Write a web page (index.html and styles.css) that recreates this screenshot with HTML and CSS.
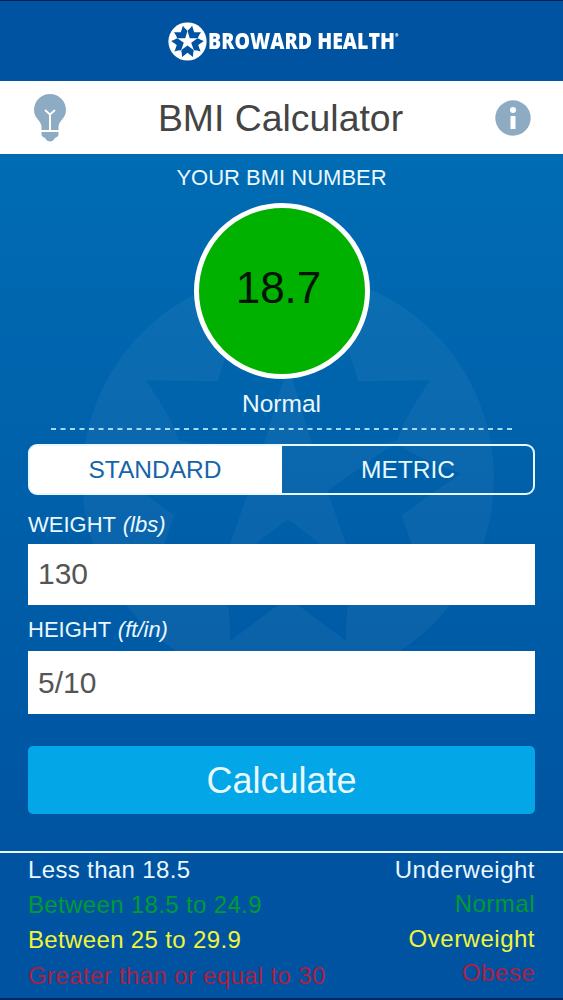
FILE: index.html
```html
<!DOCTYPE html>
<html lang="en">
<head>
    <meta charset="UTF-8">
    <meta name="viewport" content="width=device-width, initial-scale=1.0">
    <title>BMI Calculator</title>
    <link rel="stylesheet" href="styles.css">
</head>
<body>
    <div class="app">
        <!-- emblem behind the form -->
        <svg class="watermark" viewBox="-100 -100 200 200">
            <defs>
                <path id="arm" d="M0 20 L21 36 Q29 41 32 46 Q28 60 28 79 L0 58 L-28 79 Q-28 60 -32 46 Q-29 41 -21 36 Z"/>
                <g id="arms">
                    <use href="#arm"/>
                    <use href="#arm" transform="rotate(72)"/>
                    <use href="#arm" transform="rotate(144)"/>
                    <use href="#arm" transform="rotate(216)"/>
                    <use href="#arm" transform="rotate(288)"/>
                </g>
                <mask id="cutout" maskUnits="userSpaceOnUse" x="-100" y="-100" width="200" height="200">
                    <circle r="100" fill="#fff"/>
                    <use href="#arms" fill="#000"/>
                </mask>
            </defs>
            <circle r="100" fill="#fff" fill-opacity="0.045" mask="url(#cutout)"/>
        </svg>

        <header class="brand">
            <svg class="brand-mark" viewBox="-100 -100 200 200">
                <circle r="98" fill="#fff"/>
                <use href="#arms" fill="#0053a0"/>
            </svg>
            <span class="brand-name">BROWARD HEALTH<sup>®</sup></span>
        </header>

        <div class="title-bar">
            <svg class="bulb" viewBox="0 0 32 48">
                <path fill="#8eabc4" d="M16 0 C7 0 0 7 0 16 C0 25 7.500 26 7.500 33 V36 H24.500 V33 C24.500 26 32 25 32 16 C32 7 25 0 16 0 Z"/>
                <path fill="none" stroke="#fff" stroke-width="1.900" d="M16 36 V20 M11 16 L16 20.500 L21 16"/>
                <path fill="#8eabc4" d="M7.500 38 H24.500 V41 Q24 43 21 44 Q19 47.500 16 47.500 Q13 47.500 11 44 Q8 43 7.500 41 Z"/>
            </svg>
            <h1>BMI Calculator</h1>
            <svg class="info" viewBox="0 0 36 36">
                <circle cx="18" cy="18" r="17.700" fill="#8eabc4"/>
                <circle cx="18" cy="10" r="3" fill="#fff"/>
                <path fill="#fff" d="M15.500 16 H20.500 V29 H15.500 Z"/>
            </svg>
        </div>

        <main>
            <section class="result">
                <h2>YOUR BMI NUMBER</h2>
                <div class="score">18.7</div>
                <p class="score-label">Normal</p>
                <svg class="divider" viewBox="0 0 462 2"><path d="M0 1 H462"/></svg>
            </section>

            <form onsubmit="return false">
                <div class="units">
                    <button type="button" class="unit active">STANDARD</button>
                    <button type="button" class="unit">METRIC</button>
                </div>
                <label for="weight">WEIGHT <i>(lbs)</i></label>
                <input type="text" id="weight" value="130">
                <label for="height" class="height-label">HEIGHT <i>(ft/in)</i></label>
                <input type="text" id="height" class="height-input" value="5/10">
                <button type="submit" class="calculate">Calculate</button>
            </form>
        </main>

        <footer class="legend">
            <div class="ranges">
                <span>Less than 18.5</span>
                <span class="normal">Between 18.5 to 24.9</span>
                <span class="over">Between 25 to 29.9</span>
                <span class="obese">Greater than or equal to 30</span>
            </div>
            <div class="names">
                <span>Underweight</span>
                <span class="normal">Normal</span>
                <span class="over">Overweight</span>
                <span class="obese">Obese</span>
            </div>
        </footer>
    </div>
</body>
</html>
```
FILE: styles.css
```css
* {
    box-sizing: border-box;
}
body {
    margin: 0;
    font-family: "Liberation Sans", Arial, sans-serif;
    color: #e8f8ff;
}
h1, h2, p {
    margin: 0;
    font-weight: normal;
}
.app {
    position: relative;
    height: 1000px;
    overflow: hidden;
    background: linear-gradient(#006cb3 154px, #0053a0 870px);
    border-bottom: 2px solid #002764;
}
.watermark {
    position: absolute;
    left: 82px;
    top: 272px;
    width: 412px;
    height: 412px;
}
.brand {
    height: 81px;
    padding: 1px 0 0 168px;
    display: flex;
    align-items: center;
    background: #0053a0;
    border-top: 1px solid #001f54;
}
.brand-mark {
    flex: none;
    width: 39px;
    height: 39px;
}
.brand-name {
    margin: 0 0 3px 1px;
    font-family: "Open Sans", sans-serif;
    font-size: 23px;
    line-height: 30px;
    font-weight: 800;
    color: #fff;
    white-space: nowrap;
    transform: scaleX(0.85);
    transform-origin: left center;
}
.brand-name sup {
    font-size: 5px;
    line-height: 0;
    vertical-align: 12px;
}
.title-bar {
    height: 73px;
    padding: 0 32px 0 34px;
    display: flex;
    align-items: center;
    justify-content: space-between;
    background: #fff;
}
.title-bar h1 {
    padding-top: 1px;
    font-size: 37.400px;
    line-height: 40px;
    color: #444;
}
.bulb {
    width: 32px;
    height: 48px;
}
.info {
    width: 36px;
    height: 36px;
}
main {
    position: relative;
    height: 697px;
    padding: 0 28px;
}
.result {
    display: flex;
    flex-direction: column;
    align-items: center;
    padding-top: 10px;
}
.result h2 {
    font-size: 22px;
    line-height: 28px;
}
.score {
    width: 176px;
    height: 176px;
    margin-top: 11px;
    padding-bottom: 6px;
    padding-right: 6px;
    display: flex;
    align-items: center;
    justify-content: center;
    border: 5px solid #fff;
    border-radius: 50%;
    background: #00b100;
    color: #001500;
    font-size: 44px;
}
.score-label {
    margin-top: 11px;
    font-size: 24.500px;
    line-height: 28px;
}
.divider {
    width: 462px;
    height: 2px;
    margin-top: 10px;
}
.divider path {
    stroke: #a5daf2;
    stroke-width: 2;
    stroke-dasharray: 5 4.500;
}
form {
    display: flex;
    flex-direction: column;
    margin-top: 14px;
}
.units {
    display: flex;
    height: 51px;
    border: 2px solid #e8f8ff;
    border-radius: 9px;
    background: linear-gradient(90deg, #fff 50%, transparent 50%);
}
.unit {
    flex: 1;
    padding: 0;
    border: 0;
    background: none;
    color: #e8f8ff;
    font: 24.500px "Liberation Sans", Arial, sans-serif;
}
.unit.active {
    color: #1764a8;
    padding-right: 3px;
}
label {
    height: 49px;
    padding-top: 16px;
    font-size: 22px;
    line-height: 28px;
    word-spacing: 1px;
}
.height-label {
    height: 46px;
    padding-top: 11px;
}
input {
    height: 61px;
    padding: 0 9px 1px 10px;
    border: 0;
    border-radius: 0;
    background: #fff;
    color: #555;
    font: 30px "Liberation Sans", Arial, sans-serif;
}
.height-input {
    height: 63px;
    padding-bottom: 0;
}
.calculate {
    height: 68px;
    margin-top: 32px;
    padding: 2px 0 0;
    border: 0;
    border-radius: 5px;
    background: #03a6e6;
    color: #e8f8ff;
    font: 36px "Liberation Sans", Arial, sans-serif;
}
.legend {
    position: relative;
    display: flex;
    justify-content: space-between;
    padding: 0 28px;
    border-top: 2px solid #e8f8ff;
    font-size: 24px;
    letter-spacing: 0.350px;
}
.ranges, .names {
    display: flex;
    flex-direction: column;
    line-height: 35.200px;
}
.ranges {
    margin-top: -1px;
}
.names {
    line-height: 34.400px;
    letter-spacing: 0.500px;
    text-align: right;
}
.normal {
    color: #009b32;
}
.over {
    color: #f0f43a;
}
.obese {
    color: #ac2044;
}
```
